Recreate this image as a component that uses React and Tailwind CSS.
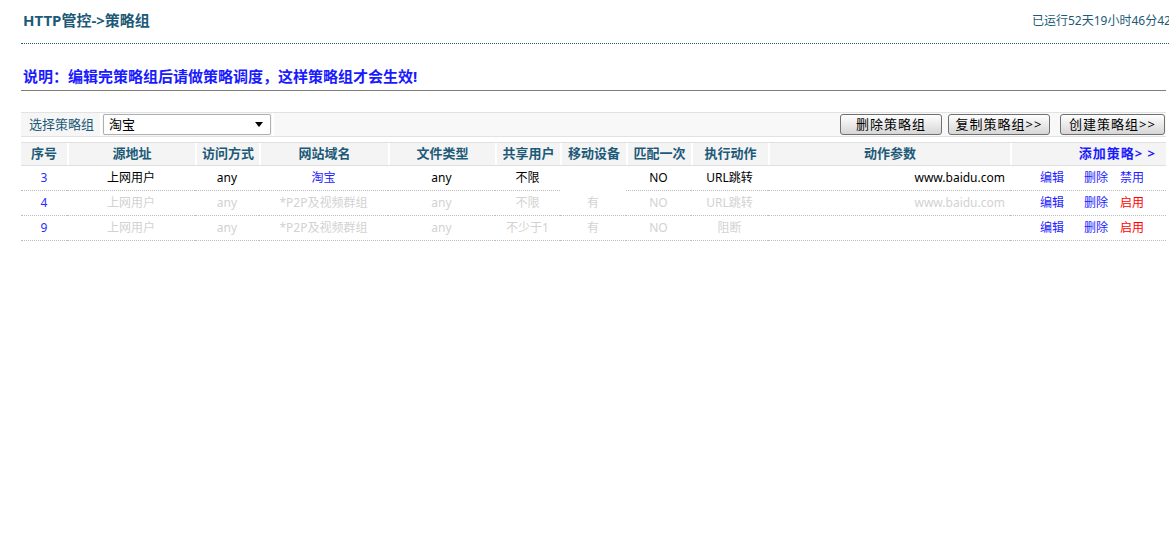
import React from "react";

const FONT = { fontFamily: '"Noto Sans", "Noto Sans CJK SC", sans-serif' };

const headers = [
  "序号",
  "源地址",
  "访问方式",
  "网站域名",
  "文件类型",
  "共享用户",
  "移动设备",
  "匹配一次",
  "执行动作",
  "动作参数",
];

const rows = [
  {
    id: 3,
    active: true,
    cells: ["上网用户", "any", "淘宝", "any", "不限", "", "NO", "URL跳转", "www.baidu.com"],
    toggle: "禁用",
  },
  {
    id: 4,
    active: false,
    cells: ["上网用户", "any", "*P2P及视频群组", "any", "不限", "有", "NO", "URL跳转", "www.baidu.com"],
    toggle: "启用",
  },
  {
    id: 9,
    active: false,
    cells: ["上网用户", "any", "*P2P及视频群组", "any", "不少于1", "有", "NO", "阻断", ""],
    toggle: "启用",
  },
];

const GRID =
  "grid grid-cols-[46px_128px_64px_129px_107px_65px_66px_65px_77px_242px_156px]";

const Button = ({ children, className = "" }) => (
  <button
    className={`h-[21px] rounded-[3px] border border-[#707070] bg-gradient-to-b from-[#ffffff] to-[#d6d6d6] text-[13px] leading-none tracking-[1px] text-black ${className}`}
  >
    {children}
  </button>
);

export default function App() {
  return (
    <div className="h-[540px] w-full overflow-hidden bg-white" style={FONT}>
      <div className="pl-[21px]">
        {/* 顶部标题 */}
        <div className="flex h-[44px] w-[1170px] items-start border-b border-dotted border-[#1d5d73] pt-[11px]">
          <div className="w-[1011px] shrink-0 pl-[2px] text-[15px] font-bold leading-[18px] text-[#1c5a78]">
            HTTP管控-&gt;策略组
          </div>
          <div className="whitespace-nowrap pt-[1px] text-[12px] leading-[18px] text-[#1c5a78]">
            已运行52天19小时46分42秒
          </div>
        </div>

        {/* 说明 */}
        <div className="w-[1145px] border-b border-[#7d7d7d] pb-[5px] pl-[2px] pt-[23px] text-[15px] font-bold leading-[18px] text-[#1a1aff]">
          说明：编辑完策略组后请做策略调度，这样策略组才会生效!
        </div>

        {/* 工具栏 */}
        <div className="mt-[21px] flex h-[25px] w-[1145px] border-t border-b border-[#e2e2e2]">
          <div className="flex w-[79px] items-center bg-[#f6f6f6] pl-[8px] text-[13px] text-[#1c5a78]">
            选择策略组
          </div>
          <div className="flex w-[172px] items-center border-l-2 border-white bg-[#f6f6f6] pl-[1px]">
            <div className="flex h-[21px] w-[168px] items-center justify-between rounded-[2px] border border-[#b0b0b0] bg-white pl-[5px] pr-[7px] text-[13px] text-black">
              <span>淘宝</span>
              <span className="h-0 w-0 border-x-[4px] border-t-[5px] border-x-transparent border-t-black" />
            </div>
          </div>
          <div className="flex flex-1 items-center justify-end border-l-2 border-white bg-[#f8f8f8] pr-[1px]">
            <Button className="w-[102px]">删除策略组</Button>
            <Button className="ml-[6px] w-[102px]">复制策略组&gt;&gt;</Button>
            <Button className="ml-[10px] w-[105px]">创建策略组&gt;&gt;</Button>
          </div>
        </div>

        {/* 表头 */}
        <div className={`${GRID} mt-[5px] h-[24px] w-[1145px] border-y border-[#e0e0e0]`}>
          {headers.map((h, i) => (
            <div
              key={h}
              className={`flex items-center justify-center bg-[#f4f4f4] text-[13px] font-bold text-[#1c5a78] ${
                i === 0 ? "" : "border-l-2 border-white"
              }`}
            >
              {h}
            </div>
          ))}
          <div className="flex items-center justify-end border-l-2 border-white bg-[#f4f4f4] pr-[10px] text-[13px] font-bold tracking-[1px] text-[#1a1aff]">
            添加策略&gt; &gt;
          </div>
        </div>

        {/* 数据行 */}
        {rows.map((r) => (
          <div key={r.id} className={`${GRID} h-[25px] w-[1145px] text-[12px]`}>
            <div className="flex items-center justify-center border-b border-dotted border-[#bdbdbd] text-[#2a2aff]">
              {r.id}
            </div>
            {r.cells.map((c, i) => {
              const isDomain = i === 2;
              const isParam = i === 8;
              const color = !r.active
                ? "text-[#d2d2d2]"
                : isDomain
                ? "text-[#2020ff]"
                : "text-black";
              const border =
                c === "" && i === 5 ? "border-b border-transparent" : "border-b border-dotted border-[#bdbdbd]";
              return (
                <div
                  key={i}
                  className={`flex items-center ${
                    isParam ? "justify-end pr-[5px]" : "justify-center"
                  } ${border} ${color}`}
                >
                  {c}
                </div>
              );
            })}
            <div className="flex items-center border-b border-dotted border-[#bdbdbd] pl-[30px]">
              <span className="text-[#2222ff]">编辑</span>
              <span className="ml-[20px] text-[#2222ff]">删除</span>
              <span
                className={`ml-[12px] ${
                  r.toggle === "启用" ? "text-[#ff0000]" : "text-[#2222ff]"
                }`}
              >
                {r.toggle}
              </span>
            </div>
          </div>
        ))}
      </div>
    </div>
  );
}
